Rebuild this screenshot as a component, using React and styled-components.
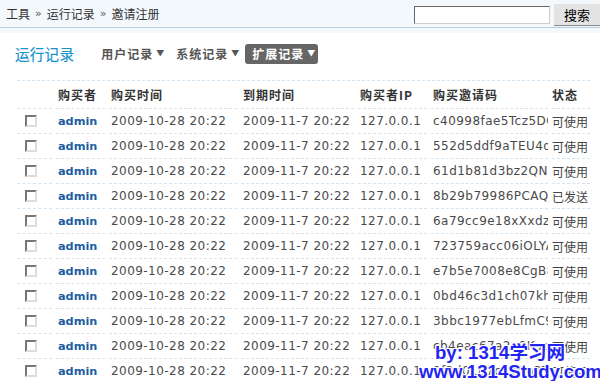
import React from 'react';
import styled, { createGlobalStyle } from 'styled-components';

const GlobalStyle = createGlobalStyle`
    html, body {
        margin: 0;
        padding: 0;
        background: #fff;
        overflow: hidden;
    }
    body {
        font-family: "DejaVu Sans", "Noto Sans CJK SC", sans-serif;
        font-size: 12px;
        color: #333;
    }
`;

const cjk = `"Noto Sans CJK SC", "DejaVu Sans", sans-serif`;

const Page = styled.div`
    position: relative;
    width: 600px;
    height: 381px;
    overflow: hidden;
`;

const TopBar = styled.div`
    background: #f3f8fc;
    padding-bottom: 5px;
`;

const Bar = styled.div`
    height: 28px;
    box-sizing: border-box;
    border-bottom: 1px solid #b7cfe0;
    display: flex;
    align-items: center;
    justify-content: space-between;
    padding-left: 6px;
`;

const Crumbs = styled.div`
    font-family: ${cjk};
    font-size: 12px;
    color: #333;
    display: flex;
    align-items: center;
    gap: 5px;
    margin-top: -1px;
`;

const Sep = styled.span`
    font-family: "DejaVu Sans", sans-serif;
    font-size: 11px;
    color: #555;
`;

const Search = styled.form`
    display: flex;
    align-items: center;
    gap: 4px;
    height: 100%;
    margin-top: 2px;
`;

const SearchInput = styled.input`
    width: 136px;
    height: 18px;
    box-sizing: border-box;
    border: 1px solid;
    border-color: #666 #ccc #ccc #666;
    background: #fff;
    padding: 0 3px;
    margin: 0;
    outline: none;
`;

const SearchButton = styled.button`
    width: 46px;
    height: 22px;
    margin: 0;
    padding: 0;
    border: none;
    border-bottom: 1px solid #8a8a8a;
    background: #e3e3e3;
    color: #000;
    font-family: ${cjk};
    font-size: 13px;
    cursor: pointer;
`;

const Tabs = styled.div`
    height: 41px;
    display: flex;
    align-items: center;
    padding-left: 15px;
`;

const Title = styled.span`
    font-family: ${cjk};
    font-size: 14.5px;
    color: #1893cc;
    margin-right: 27px;
    letter-spacing: 0.3px;
    -webkit-text-stroke: 0.2px #1893cc;
`;

const Tab = styled.span`
    display: inline-flex;
    align-items: center;
    gap: 3px;
    height: 20px;
    padding: ${p => (p.$active ? '0 3px 0 7px' : '0')};
    margin: ${p => (p.$active ? '0 0 0 -6px' : '0 12px 0 0')};
    border-radius: 3px;
    background: ${p => (p.$active ? '#666' : 'transparent')};
    color: ${p => (p.$active ? '#fff' : '#555')};
    font-family: ${cjk};
    font-weight: bold;
    font-size: 12px;
    letter-spacing: 1px;
`;

const Caret = styled.span`
    font-size: 8px;
    letter-spacing: 0;
    margin-top: -2px;
`;

const Table = styled.div`
    margin: 6px 0 0 17px;
    width: 573px;
`;

const cols = '35px 49px 128px 113px 69px 117px 38px';

const HeadRow = styled.div`
    display: grid;
    grid-template-columns: ${cols};
    column-gap: 4px;
    border-top: 1px dashed #d3e5f3;
`;

const Row = styled.div`
    display: grid;
    grid-template-columns: ${cols};
    column-gap: 4px;
`;

const Cell = styled.div`
    height: ${p => (p.$head ? '27px' : '24px')};
    border-bottom: 1px dashed #d3e5f3;
    display: flex;
    align-items: center;
    padding-left: ${p => p.$pad ?? 2}px;
    overflow: hidden;
    white-space: nowrap;
`;

const HeadText = styled.span`
    font-family: ${cjk};
    font-weight: bold;
    font-size: 12px;
    color: #333;
    letter-spacing: 1px;
`;

const DataText = styled.span`
    font-family: "DejaVu Sans", sans-serif;
    font-size: 12px;
    letter-spacing: 0.45px;
    color: #4a4a4a;
`;

const User = styled.a`
    font-family: "DejaVu Sans", sans-serif;
    font-weight: bold;
    font-size: 11.3px;
    color: #1e5e9f;
    text-decoration: none;
`;

const Status = styled.span`
    font-family: ${cjk};
    font-size: 12px;
    color: #444;
`;

const Check = styled.input`
    appearance: none;
    width: 12px;
    height: 12px;
    margin: 0;
    box-sizing: border-box;
    border: 2px solid;
    border-color: #777 #ddd #ddd #777;
    background: #fff;
`;

const Watermark = styled.div`
    position: absolute;
    left: 419px;
    top: 343px;
    font-family: "Liberation Sans", "Noto Sans CJK SC", sans-serif;
    font-weight: bold;
    font-size: 18.6px;
    line-height: 19px;
    color: #2424f2;
    text-shadow: 1px 1px 0 #fff, -1px -1px 0 #fff, 1px -1px 0 #fff, -1px 1px 0 #fff,
        0 1px 0 #fff, 1px 0 0 #fff, 0 -1px 0 #fff, -1px 0 0 #fff;
    pointer-events: none;
`;

const MarkLine = styled.div`
    padding-left: ${p => p.$indent || 0}px;
    white-space: nowrap;
`;

const rows = [
    ['c40998fae5Tcz5DQ4a', '可使用'],
    ['552d5ddf9aTEU4qk8', '可使用'],
    ['61d1b81d3bz2QNwe', '可使用'],
    ['8b29b79986PCAQ', '已发送'],
    ['6a79cc9e18xXxdzA', '可使用'],
    ['723759acc06iOLYAp', '可使用'],
    ['e7b5e7008e8CgB8r', '可使用'],
    ['0bd46c3d1ch07kh', '可使用'],
    ['3bbc1977ebLfmC9', '可使用'],
    ['cb4eac67a2e9Ksq', '可使用'],
    ['9f2d01b7c4Wm3T', '可使用'],
];

export default function App() {
    return (
        <Page>
            <GlobalStyle />
            <TopBar>
                <Bar>
                    <Crumbs>
                        <span>工具</span>
                        <Sep>»</Sep>
                        <span>运行记录</span>
                        <Sep>»</Sep>
                        <span>邀请注册</span>
                    </Crumbs>
                    <Search onSubmit={e => e.preventDefault()}>
                        <SearchInput type="text" />
                        <SearchButton type="submit">搜索</SearchButton>
                    </Search>
                </Bar>
            </TopBar>

            <Tabs>
                <Title>运行记录</Title>
                <Tab>用户记录<Caret>▼</Caret></Tab>
                <Tab>系统记录<Caret>▼</Caret></Tab>
                <Tab $active>扩展记录<Caret>▼</Caret></Tab>
            </Tabs>

            <Table>
                <HeadRow>
                    <Cell $head />
                    <Cell $head><HeadText>购买者</HeadText></Cell>
                    <Cell $head><HeadText>购买时间</HeadText></Cell>
                    <Cell $head><HeadText>到期时间</HeadText></Cell>
                    <Cell $head><HeadText>购买者IP</HeadText></Cell>
                    <Cell $head><HeadText>购买邀请码</HeadText></Cell>
                    <Cell $head $pad={0}><HeadText>状态</HeadText></Cell>
                </HeadRow>
                {rows.map(([code, status], i) => (
                    <Row key={i}>
                        <Cell $pad={8}><Check type="checkbox" /></Cell>
                        <Cell><User href="#">admin</User></Cell>
                        <Cell><DataText>2009-10-28 20:22</DataText></Cell>
                        <Cell><DataText>2009-11-7 20:22</DataText></Cell>
                        <Cell><DataText>127.0.0.1</DataText></Cell>
                        <Cell><DataText>{code}</DataText></Cell>
                        <Cell $pad={0}><Status>{status}</Status></Cell>
                    </Row>
                ))}
            </Table>

            <Watermark>
                <MarkLine $indent={16}>by: 1314学习网</MarkLine>
                <MarkLine>www.1314Study.com</MarkLine>
            </Watermark>
        </Page>
    );
}
